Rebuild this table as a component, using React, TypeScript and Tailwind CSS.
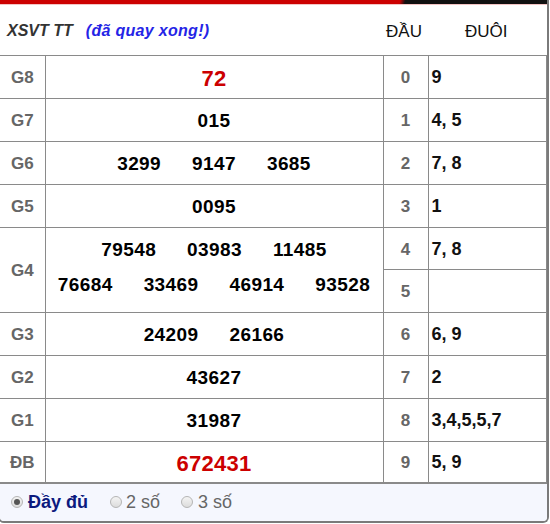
const rows: { g: string; nums: string[][]; red?: boolean }[] = [
  { g: 'G8', nums: [['72']], red: true },
  { g: 'G7', nums: [['015']] },
  { g: 'G6', nums: [['3299', '9147', '3685']] },
  { g: 'G5', nums: [['0095']] },
  {
    g: 'G4',
    nums: [
      ['79548', '03983', '11485'],
      ['76684', '33469', '46914', '93528'],
    ],
  },
  { g: 'G3', nums: [['24209', '26166']] },
  { g: 'G2', nums: [['43627']] },
  { g: 'G1', nums: [['31987']] },
  { g: 'ĐB', nums: [['672431']], red: true },
];

const duoi = ['9', '4, 5', '7, 8', '1', '7, 8', '', '6, 9', '2', '3,4,5,5,7', '5, 9'];
const heights = ['h-[43px]', 'h-[43px]', 'h-[43px]', 'h-[43px]', 'h-[42.5px]', 'h-[42.5px]', 'h-[43px]', 'h-[43px]', 'h-[43px]', 'h-[41px]'];

function Radio({ on }: { on?: boolean }) {
  return (
    <span className="flex h-[12px] w-[12px] items-center justify-center rounded-full border border-[#b5b5b5] bg-[linear-gradient(#f4f4f4,#dcdcdc)]">
      {on && <span className="h-[6px] w-[6px] rounded-full bg-[#555]" />}
    </span>
  );
}

export default function App() {
  // giai rows sit on the 10 dau rows (G4 spans two)
  const giaiAt: Record<number, number> = { 0: 0, 1: 1, 2: 2, 3: 3, 4: 4, 6: 5, 7: 6, 8: 7, 9: 8 };

  return (
    <div className="ml-[-2px] w-[551px] overflow-hidden rounded-b-[6px] border-x-2 border-b-2 border-[#7a7a7a] bg-white font-['Liberation_Sans',Arial,sans-serif]">
      <div className="h-[4px] w-full bg-[linear-gradient(105deg,#cc0000_0%,#cc0000_73%,#111_74%,#111_100%)]" />
      <div className="h-px w-full bg-[#f3c4c4]" />
      <table className="w-[546px] table-fixed border-collapse">
        <colgroup>
          <col className="w-[45px]" />
          <col className="w-[338px]" />
          <col className="w-[45px]" />
          <col className="w-[118px]" />
        </colgroup>
        <thead>
          <tr className="h-[50px]">
            <th colSpan={2} className="pl-[7px] pt-[3px] text-left font-normal">
              <span className="text-[16px] font-bold italic text-[#333]">XSVT TT</span>
              <span className="ml-[13px] text-[16px] font-bold italic tracking-[0.3px] text-[#2424e6]">(đã quay xong!)</span>
            </th>
            <th colSpan={2} className="pt-[3px] text-left text-[17px] font-normal text-[#111]">
              <span className="ml-[3px]">ĐẦU</span>
              <span className="ml-[43px]">ĐUÔI</span>
            </th>
          </tr>
        </thead>
        <tbody>
          {duoi.map((d, i) => {
            const gi = giaiAt[i];
            const r = gi !== undefined ? rows[gi] : undefined;
            const g4 = r?.g === 'G4';
            return (
              <tr key={i} className={heights[i]}>
                {r && (
                  <>
                    <td
                      rowSpan={g4 ? 2 : 1}
                      className="border-y border-r border-[#8a8a8a] pt-[2px] text-center text-[17px] font-bold text-[#666]"
                    >
                      {r.g}
                    </td>
                    <td rowSpan={g4 ? 2 : 1} className={`border border-[#8a8a8a] ${g4 ? 'pb-[5px]' : 'pt-[3px]'}`}>
                      <div className="flex flex-col items-center gap-[13px]">
                        {r.nums.map((line, li) => (
                          <div key={li} className="flex justify-center gap-[31px]">
                            {line.map((n) => (
                              <span
                                key={n}
                                className={
                                  r.red
                                    ? 'text-[22px] leading-[25px] font-bold tracking-[0.3px] text-[#cc0000]'
                                    : 'text-[19px] leading-[22px] font-bold tracking-[0.4px] text-black'
                                }
                              >
                                {n}
                              </span>
                            ))}
                          </div>
                        ))}
                      </div>
                    </td>
                  </>
                )}
                <td className="border border-[#8a8a8a] pt-[2px] text-center text-[17px] font-bold text-[#666]">{i}</td>
                <td className="border border-[#8a8a8a] pl-[3px] pt-[2px] text-[18px] font-bold text-[#111]">{d}</td>
              </tr>
            );
          })}
        </tbody>
      </table>
      <div className="flex h-[38px] items-center border-t border-[#8a8a8a] bg-[#f5f7fe] pl-[11px] text-[18px]">
        <Radio on />
        <span className="ml-[5px] font-bold text-[#0c1a7e]">Đầy đủ</span>
        <span className="ml-[22px]">
          <Radio />
        </span>
        <span className="ml-[4px] text-[#666]">2 số</span>
        <span className="ml-[21px]">
          <Radio />
        </span>
        <span className="ml-[5px] text-[#666]">3 số</span>
      </div>
    </div>
  );
}
